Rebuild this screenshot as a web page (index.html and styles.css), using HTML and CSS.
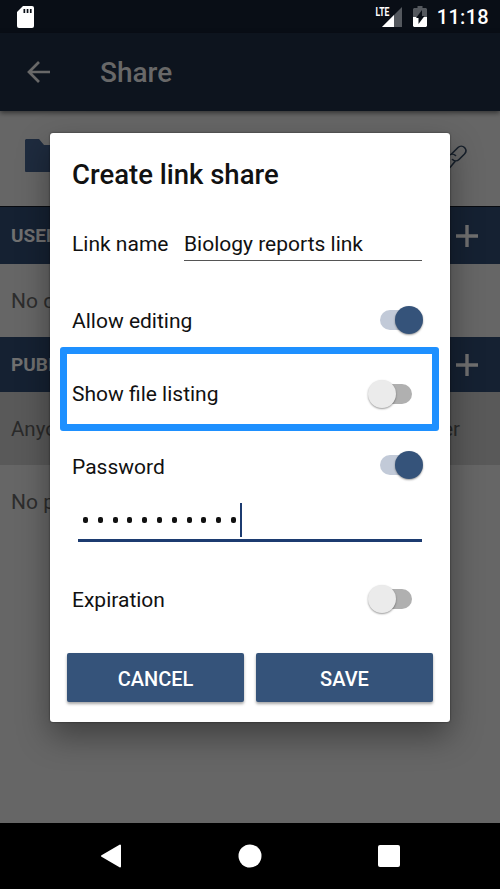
FILE: index.html
```html
<!DOCTYPE html>
<html lang="en">
<head>
<meta charset="utf-8">
<title>Share</title>
<link rel="stylesheet" href="styles.css">
</head>
<body>
<div class="screen">
  <header class="status">
    <svg class="sd" width="17" height="22" viewBox="0 0 17 22"><path fill="#fff" d="M6 0h9q2 0 2 2v18q0 2-2 2H2q-2 0-2-2V6z"/><path fill="#090e16" d="M6.5 3h1.7v4H6.500zM9.700 3h1.700v4H9.700zM12.900 3h1.700v4h-1.700z"/></svg>
    <div class="status-right">
      <span class="lte">LTE</span>
      <svg class="signal" width="20" height="20" viewBox="0 0 20 20"><path fill="#54585e" d="M20 0v20H0z"/><path fill="#fff" d="M12 8v12H0z"/></svg>
      <svg class="battery" width="14" height="21" viewBox="0 0 14 21"><path fill="#54585e" d="M4.500 0h5v2H13l1 1v8H0V3l1-1h3.500z"/><path fill="#fff" d="M0 11h14v9l-1 1H1l-1-1z"/><path fill="#090e16" d="M9 4v6h2.500L5.500 18v-6H3z"/></svg>
      <span class="clock">11:18</span>
    </div>
  </header>
  <div class="toolbar">
    <svg width="24" height="24" viewBox="0 0 24 24"><path d="M23 12H2M12 2L2 12l10 10" fill="none" stroke="#686868" stroke-width="2.700"/></svg>
    <h1>Share</h1>
  </div>
  <main class="content">
    <div class="file-row">
      <svg width="40" height="33" viewBox="0 0 40 33"><path fill="#1e2b3e" d="M1 0h13l5 6h21v27H1q-1 0-1-1V1z"/></svg>
      <svg class="chain" width="26" height="26" viewBox="0 0 26 26"><g fill="none" stroke="#17202b" stroke-width="1.600" stroke-linecap="round"><path d="M10.500 10L17 3.500a4.700 4.700 0 0 1 6.500 0q3 3.300 0 6.500L18 15.500a4.700 4.700 0 0 1-6.500 0"/><path d="M14.500 11.500a4.700 4.700 0 0 0-6.500 0L2.500 17q-3 3.200 0 6.500 3.300 2.700 6.500 0L14 17.500"/></g></svg>
    </div>
    <div class="section first"><span>USERS AND GROUPS</span><svg width="22" height="22" viewBox="0 0 22 22"><path d="M0 11h22M11 0v22" stroke="#707070" stroke-width="3.400"/></svg></div>
    <div class="note">No data shared with users yet</div>
    <div class="section"><span>PUBLIC LINKS</span><svg width="22" height="22" viewBox="0 0 22 22"><path d="M0 11h22M11 0v22" stroke="#707070" stroke-width="3.400"/></svg></div>
    <div class="info"><span>Anyone with the link has</span><span>access to the folder</span></div>
    <div class="note links">No public links yet</div>
  </main>
  <nav class="navbar">
    <svg width="22" height="24" viewBox="0 0 22 24"><path d="M2 12L20 1.500v21z" fill="#fff" stroke="#fff" stroke-width="2" stroke-linejoin="round"/></svg>
    <svg width="24" height="24" viewBox="0 0 24 24"><circle cx="12" cy="12" r="11.500" fill="#fff"/></svg>
    <svg width="22" height="22" viewBox="0 0 22 22"><rect width="22" height="22" rx="2" fill="#fff"/></svg>
  </nav>
</div>
<section class="dialog">
  <h2>Create link share</h2>
  <div class="name-row"><span>Link name</span><div class="name-field">Biology reports link</div></div>
  <div class="row first"><span>Allow editing</span><div class="switch on"><i class="thumb"></i></div></div>
  <div class="row"><span>Show file listing</span><div class="switch"><i class="thumb"></i></div></div>
  <div class="row password"><span>Password</span><div class="switch on"><i class="thumb"></i></div></div>
  <div class="secret"><div class="dots"><i></i><i></i><i></i><i></i><i></i><i></i><i></i><i></i><i></i><i></i><i></i></div><div class="caret"></div></div>
  <div class="row expiration"><span>Expiration</span><div class="switch"><i class="thumb"></i></div></div>
  <div class="actions"><button>CANCEL</button><button>SAVE</button></div>
  <div class="highlight"></div>
</section>
</body>
</html>
```
FILE: styles.css
```css
* { box-sizing: border-box; }
body { margin: 0; width: 500px; height: 889px; overflow: hidden; font-family: Roboto, "Liberation Sans", sans-serif; }
svg { display: block; flex: none; }
h1, h2 { margin: 0; font-weight: 500; }
.screen { height: 889px; display: flex; flex-direction: column; background: #666; }
.status { height: 33px; flex: none; display: flex; justify-content: space-between; background: #090e16; color: #fff; padding: 6px 11px 0 17px; }
.status-right { display: flex; }
.lte { font: 700 12px/12px Roboto, sans-serif; transform: scaleX(.72); transform-origin: right; margin-right: -8px; z-index: 1; }
.signal { margin-top: 1px; }
.battery { margin: 0 10px 0 11px; }
.clock { font-size: 20px; line-height: 23px; font-weight: 500; letter-spacing: .3px; }
.toolbar { height: 78px; flex: none; display: flex; align-items: center; gap: 49px; padding-left: 27px; background: #0d141e; color: #686868; box-shadow: 0 2px 5px rgba(0,0,0,.5); z-index: 1; }
.toolbar h1 { font-size: 28px; line-height: 34px; padding-top: 2px; }
.content { flex: 1; }
.file-row { height: 95px; display: flex; justify-content: space-between; padding: 28px 33px 0 25px; }
.chain { margin-top: 5px; }
.section { height: 55px; display: flex; align-items: center; justify-content: space-between; padding: 0 22px 0 11px; background: #152132; color: #707070; font-size: 19px; font-weight: 700; }
.section.first { height: 58px; border-top: 1px solid #080b10; }
.note { height: 73px; line-height: 75px; padding-left: 11px; font-size: 21px; color: #2d2d2d; }
.note.links { line-height: 74px; }
.info { height: 73px; display: flex; justify-content: space-between; align-items: center; padding: 0 40px 0 11px; background: #595959; font-size: 20.5px; color: #2a2a2a; white-space: nowrap; }
.navbar { height: 66px; flex: none; background: #000; display: flex; justify-content: space-between; align-items: center; padding: 0 100px; }
.dialog { position: absolute; left: 50px; top: 133px; width: 400px; height: 589px; border-radius: 3px; background: #fff; color: #111; font-size: 21px; line-height: 26px; box-shadow: 0 0 2px rgba(0,0,0,.6), 0 14px 32px rgba(0,0,0,.38); }
.dialog h2 { height: 84px; line-height: 84px; padding-left: 22px; font-size: 27.5px; }
.name-row { display: flex; height: 44px; padding: 0 28px 0 22px; justify-content: space-between; line-height: 54px; }
.name-field { width: 238px; height: 44px; border-bottom: 1px solid #555; }
.row { height: 73px; display: flex; align-items: center; justify-content: space-between; padding: 0 28px 0 22px; }
.row.first { margin-top: 23px; }
.switch { width: 54px; height: 28px; display: flex; align-items: center; background: linear-gradient(#b0b0b0 0 0) 14px 4px / 30px 20px no-repeat; }
.switch { position: relative; background: none; }
.switch::before { content: ""; position: absolute; left: 11px; top: 4px; width: 33px; height: 20px; border-radius: 10px; background: #b0b0b0; }
.thumb { position: relative; width: 28px; height: 28px; border-radius: 50%; background: #ebebeb; box-shadow: 0 1px 2px rgba(0,0,0,.4); }
.on::before { background: #c2cad8; }
.on .thumb { margin-left: auto; background: #35537a; }
.on .thumb, .on::before { translate: 1px -1px; }
.password .switch { margin-bottom: 2px; }
.secret { height: 39px; margin: 0 28px; border-bottom: 3px solid #1c3b70; display: flex; padding-left: 5px; }
.dots { display: flex; gap: 9.800px; align-items: center; height: 34px; }
.dots i { width: 5px; height: 6px; border-radius: 2px; background: #111; }
.caret { width: 2px; height: 34px; margin-left: 4px; background: #1c3b70; }
.expiration { margin-top: 21px; }
.expiration .switch { margin-bottom: 2px; }
.actions { display: flex; gap: 12px; padding: 17px 17px 0; }
.actions button { flex: 1; height: 49px; border: 0; border-radius: 2px; padding: 2px 0 0; background: #35537a; box-shadow: 0 2px 3px rgba(0,0,0,.35); color: #fff; font: 500 20px/24px Roboto, sans-serif; }
.highlight { position: absolute; left: 10px; top: 214px; width: 379px; height: 84px; border: 7px solid #1e90ff; border-radius: 3px; }
```
